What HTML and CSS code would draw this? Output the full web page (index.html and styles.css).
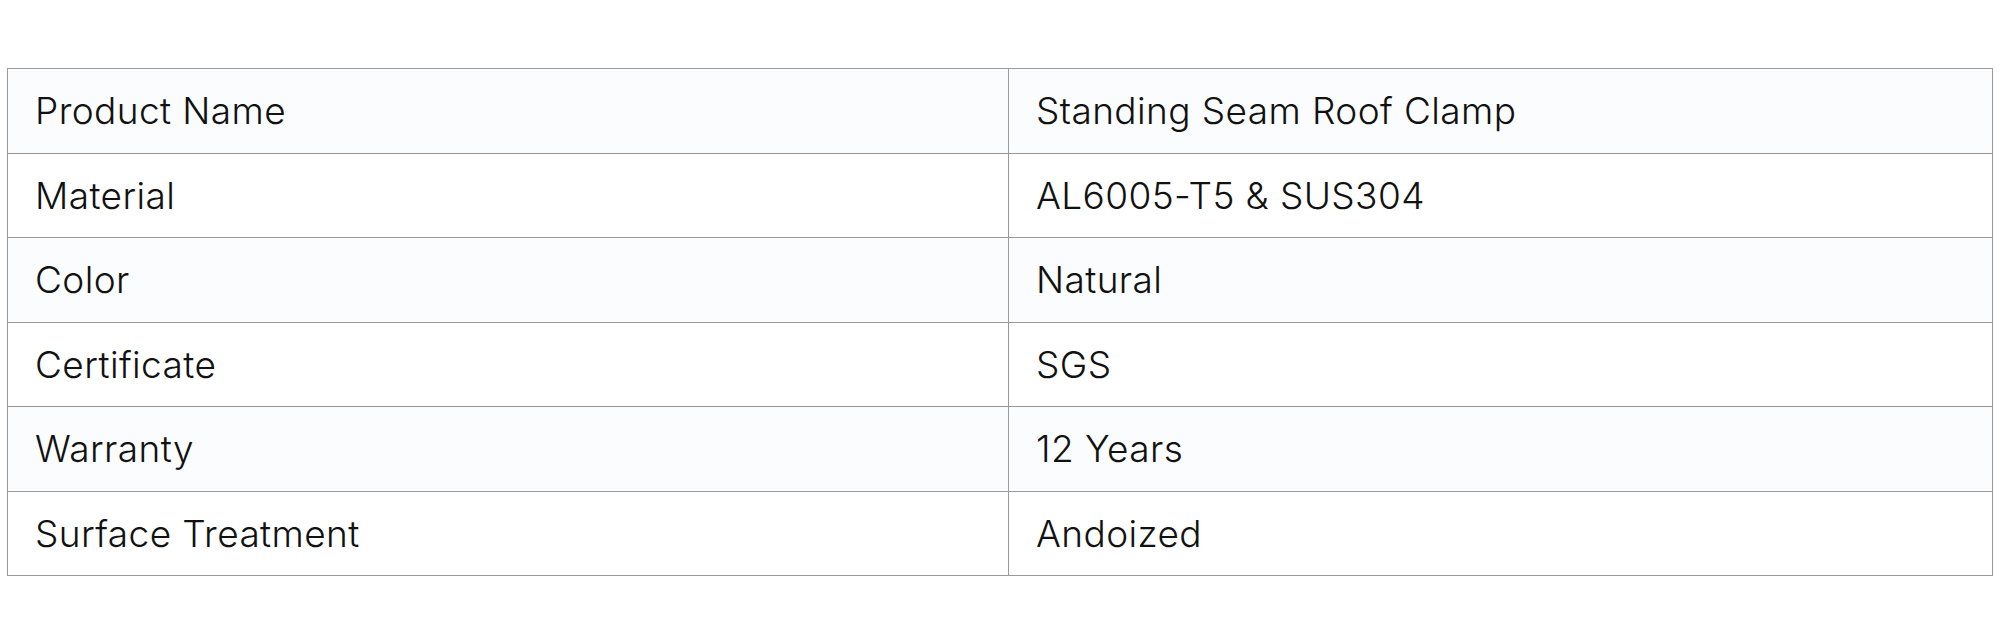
FILE: index.html
```html
<!DOCTYPE html>
<html>
<head>
<meta charset="utf-8">
<link rel="stylesheet" href="styles.css">
</head>
<body>
<table class="spec">
  <tbody>
    <tr><td>Product Name</td><td>Standing Seam Roof Clamp</td></tr>
    <tr><td>Material</td><td>AL6005-T5 &amp; SUS304</td></tr>
    <tr><td>Color</td><td>Natural</td></tr>
    <tr><td>Certificate</td><td>SGS</td></tr>
    <tr><td>Warranty</td><td>12 Years</td></tr>
    <tr><td>Surface Treatment</td><td>Andoized</td></tr>
  </tbody>
</table>
</body>
</html>
```
FILE: styles.css
```css
html, body {
  margin: 0;
  padding: 0;
  background: #ffffff;
}
body {
  padding: 68px 8px 0 7px;
  font-family: Inter, "Noto Sans", sans-serif;
}
.spec {
  width: 1986px;
  border-collapse: collapse;
  table-layout: fixed;
  color: #111111;
  font-size: 37px;
  font-weight: 350;
  letter-spacing: 0.4px;
}
.spec td {
  border: 1px solid #9a9a9a;
  height: 83.5px;
  padding: 0 27px;
  vertical-align: middle;
  line-height: 1;
}
.spec td:first-child {
  width: 1001px;
  box-sizing: border-box;
}
.spec tr:nth-child(odd) td {
  background: #fbfcfe;
}
```
